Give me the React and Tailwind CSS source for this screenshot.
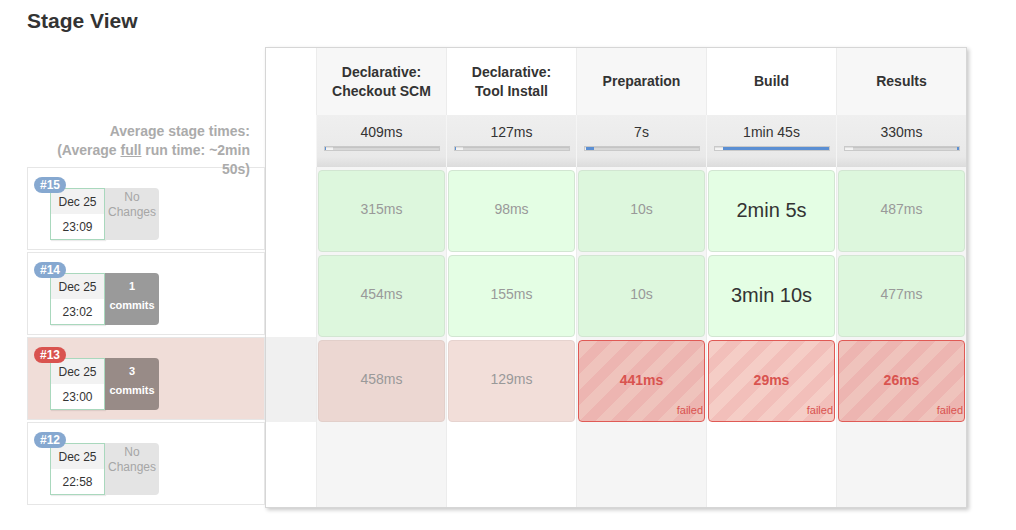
import React from "react";

const stages = [
  { name: ["Declarative:", "Checkout SCM"], avg: "409ms", bar: [0, 1] },
  { name: ["Declarative:", "Tool Install"], avg: "127ms", bar: [0, 1] },
  { name: ["Preparation"], avg: "7s", bar: [1, 8] },
  { name: ["Build"], avg: "1min 45s", bar: [9, 107] },
  { name: ["Results"], avg: "330ms", bar: [114, 2] },
];

const runs = [
  {
    id: "#15",
    date: "Dec 25",
    time: "23:09",
    commits: 0,
    status: "ok",
    cells: [
      { t: "315ms" },
      { t: "98ms" },
      { t: "10s" },
      { t: "2min 5s", long: true },
      { t: "487ms" },
    ],
  },
  {
    id: "#14",
    date: "Dec 25",
    time: "23:02",
    commits: 1,
    status: "ok",
    cells: [
      { t: "454ms" },
      { t: "155ms" },
      { t: "10s" },
      { t: "3min 10s", long: true },
      { t: "477ms" },
    ],
  },
  {
    id: "#13",
    date: "Dec 25",
    time: "23:00",
    commits: 3,
    status: "failed",
    cells: [
      { t: "458ms", s: "pink" },
      { t: "129ms", s: "pink" },
      { t: "441ms", s: "failed" },
      { t: "29ms", s: "failed" },
      { t: "26ms", s: "failed" },
    ],
  },
  {
    id: "#12",
    date: "Dec 25",
    time: "22:58",
    commits: 0,
    status: "ok",
    cells: [],
  },
];

const cellStyles = {
  ok: [
    "bg-[#ddf7dd] border-[#d2e6d2]",
    "bg-[#e4fee4] border-[#d2e6d2]",
  ],
  pink: [
    "bg-[#ecd7d2] border-[#e2cfca]",
    "bg-[#f2ded9] border-[#e6d3cf]",
  ],
  failed: [
    "bg-[repeating-linear-gradient(-45deg,#efc3bc_0px,#efc3bc_11px,#edb5b1_11px,#edb5b1_22px)] border-[#e05a55]",
    "bg-[repeating-linear-gradient(-45deg,#f5cdc6_0px,#f5cdc6_11px,#f2bfba_11px,#f2bfba_22px)] border-[#e05a55]",
  ],
};

function StageCell({ cell, col }) {
  const kind = cell.s || "ok";
  const cls = cellStyles[kind][col % 2];
  if (kind === "failed") {
    return (
      <div className={`h-[82px] rounded-[4px] border flex flex-col ${cls}`}>
        <div className="flex-1 flex items-center justify-center pt-[16px] text-[14px] font-bold text-[#d9534f]">
          {cell.t}
        </div>
        <div className="text-right text-[11px] leading-[13px] pr-[1px] pb-[4px] text-[#d9534f]">
          failed
        </div>
      </div>
    );
  }
  return (
    <div
      className={`h-[82px] rounded-[4px] border flex items-center justify-center pb-[3px] ${cls} ${
        cell.long ? "text-[20px] text-[#333]" : "text-[14px] text-[#999]"
      }`}
    >
      {cell.t}
    </div>
  );
}

function RunLabel({ run }) {
  const failed = run.status === "failed";
  return (
    <div
      className={`relative h-[83px] mb-[2px] border border-[#e6e6e6] ${
        failed ? "bg-[#f0ddd8]" : "bg-white"
      }`}
    >
      <div
        className={`absolute left-[6px] top-[9px] z-10 w-[32px] h-[16px] rounded-full flex items-center justify-center text-[12px] font-bold text-white ${
          failed ? "bg-[#d9534f]" : "bg-[#86a8d0]"
        }`}
      >
        {run.id}
      </div>
      <div className="flex ml-[22px] mt-[20px]">
        <div className="w-[55px] h-[52px] border border-[#a9d8bd] flex flex-col text-[12px] text-[#333] shadow-[1px_1px_1px_rgba(0,0,0,0.08)]">
          <div className="h-[25px] bg-[#f2f2f2] flex items-center justify-center pt-[1px]">
            {run.date}
          </div>
          <div className="flex-1 bg-white flex items-center justify-center">
            {run.time}
          </div>
        </div>
        {run.commits > 0 ? (
          <div
            className={`w-[54px] h-[52px] rounded-r-[4px] flex flex-col items-center pt-[4px] text-[11px] font-bold leading-[19px] text-white ${
              failed ? "bg-[#988b87]" : "bg-[#9a9a9a]"
            }`}
          >
            <span>{run.commits}</span>
            <span>commits</span>
          </div>
        ) : (
          <div className="w-[54px] h-[52px] rounded-r-[4px] bg-[#e4e4e4] flex flex-col items-center pt-[2px] text-[12px] leading-[15px] text-[#a6a6a6]">
            <span>No</span>
            <span>Changes</span>
          </div>
        )}
      </div>
    </div>
  );
}

export default function App() {
  return (
    <div
      className="w-[1016px] h-[530px] bg-white pl-[27px] text-[#333]"
      style={{ fontFamily: '"Liberation Sans", Arial, sans-serif' }}
    >
      <h2 className="pt-[9px] text-[21px] leading-[24px] font-bold text-[#333]">Stage View</h2>

      <div className="flex mt-[14px]">
        {/* left: run labels */}
        <div className="w-[238px] flex flex-col">
          <div className="relative z-20 h-[120px] pt-[75px] pr-[15px] text-right text-[14px] leading-[19px] font-bold text-[#ababab]">
            Average stage times:
            <br />
            (Average <span className="underline">full</span> run time: ~2min
            <br />
            50s)
          </div>
          {runs.map((run) => (
            <RunLabel key={run.id} run={run} />
          ))}
        </div>

        {/* right: stage grid */}
        <div className="border border-[#d6d6d6] shadow-[2px_2px_4px_rgba(0,0,0,0.22)] grid grid-cols-[50px_repeat(5,130px)] grid-rows-[67px_52px_repeat(4,85px)]">
          {/* header */}
          <div className="bg-white" />
          {stages.map((s, i) => (
            <div
              key={s.avg}
              className={`border-l border-[#ececec] flex flex-col items-center justify-center text-[14px] leading-[19px] font-bold text-[#333] text-center ${
                i % 2 === 0 ? "bg-[#f7f7f7]" : "bg-white"
              }`}
            >
              {s.name.map((n) => (
                <span key={n}>{n}</span>
              ))}
            </div>
          ))}

          {/* average times */}
          <div className="bg-white" />
          {stages.map((s) => (
            <div
              key={s.avg}
              className="border-l border-[#f5f5f5] bg-[linear-gradient(to_bottom,#efefef_0%,#e9e9e9_80%,#dcdcdc_100%)] flex flex-col items-center pt-[8px]"
            >
              <div className="text-[14px] leading-[18px] text-[#333]">{s.avg}</div>
              <div className="mt-[5px] w-[116px] h-[5px] border border-[#c9c9c9] bg-[linear-gradient(to_right,#f4f4f4_8px,#d8d8d8_8px)] flex shadow-[inset_0_1px_1px_rgba(0,0,0,0.1)]">
                <div style={{ width: s.bar[0] }} />
                <div className="h-full bg-[#5b8fd3]" style={{ width: s.bar[1] }} />
              </div>
            </div>
          ))}

          {/* runs */}
          {runs.map((run) => (
            <React.Fragment key={run.id}>
              <div className={run.status === "failed" ? "bg-[#f0f0f0]" : "bg-white"} />
              {stages.map((s, i) => (
                <div
                  key={s.avg}
                  className={`border-l border-[#ececec] px-[1px] pt-[3px] ${
                    i % 2 === 0 ? "bg-[#f5f5f5]" : "bg-white"
                  }`}
                >
                  {run.cells[i] && <StageCell cell={run.cells[i]} col={i} />}
                </div>
              ))}
            </React.Fragment>
          ))}
        </div>
      </div>
    </div>
  );
}
